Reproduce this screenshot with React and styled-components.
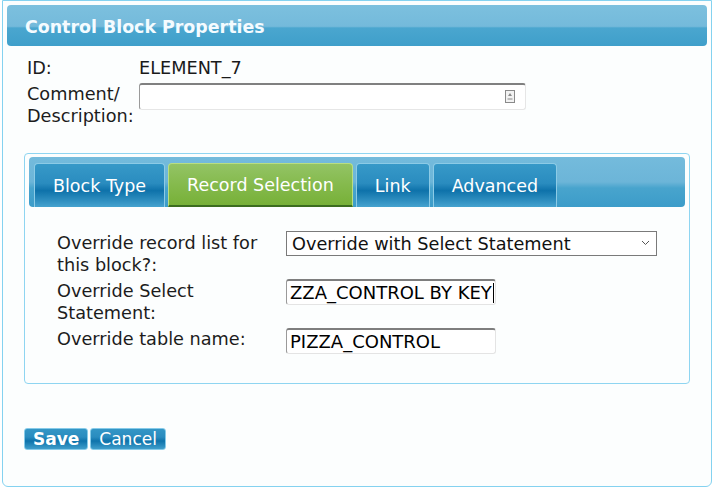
import React from 'react';
import styled, { createGlobalStyle } from 'styled-components';

const GlobalStyle = createGlobalStyle`
  html, body {
    margin: 0;
    padding: 0;
    background: #ffffff;
  }
  body {
    font-family: "DejaVu Sans", Verdana, sans-serif;
    color: #1a1a1a;
  }
`;

const Dialog = styled.div`
  box-sizing: border-box;
  width: 710px;
  height: 487px;
  margin-left: 2px;
  border: 1px solid #84d2f0;
  border-radius: 0 0 6px 6px;
  background: #fcfefe;
  padding: 4px;
  display: flex;
  flex-direction: column;
`;

const TitleBar = styled.div`
  height: 41px;
  box-sizing: border-box;
  border-radius: 4px;
  padding: 2px 0 0 18px;
  display: flex;
  align-items: center;
  color: #f4fbff;
  font-size: 17.4px;
  font-weight: bold;
  background: linear-gradient(
    to bottom,
    #7cc0de 0%,
    #74badb 52%,
    #4aa6cf 56%,
    #3f9fca 100%
  );
`;

const Body = styled.div`
  padding: 0 20px 0 20px;
`;

const InfoGrid = styled.div`
  display: grid;
  grid-template-columns: 112px 387px;
  align-items: start;
  row-gap: 4px;
  margin-top: 11px;
  font-size: 17.7px;
  line-height: 22px;
`;

const Label = styled.div`
  color: #1c1c1c;
`;

const TextArea = styled.div`
  position: relative;
  box-sizing: border-box;
  height: 27px;
  border: 1px solid #e6e6e6;
  border-top: 2px solid #808080;
  border-left: 1px solid #9a9a9a;
  border-radius: 3px;
  background: #ffffff;
`;

const ResizeIcon = styled.svg`
  position: absolute;
  right: 10px;
  top: 5px;
`;

const Panel = styled.div`
  margin: 26px -3px 0 -3px;
  border: 1px solid #8ed5f1;
  border-radius: 4px;
  padding: 3px 4px 29px 4px;
`;

const TabBar = styled.div`
  height: 50px;
  box-sizing: border-box;
  border-radius: 4px;
  padding: 6px 5px 0 5px;
  display: flex;
  align-items: flex-end;
  gap: 3px;
  background: linear-gradient(
    to bottom,
    #74bbdc 0%,
    #6cb5d8 50%,
    #48a4cd 62%,
    #3c9cc9 100%
  );
`;

const Tab = styled.div`
  box-sizing: border-box;
  height: 44px;
  padding: 0 18px;
  display: flex;
  align-items: center;
  color: #ffffff;
  font-size: 17.5px;
  border: 1px solid ${p => (p.$active ? '#b9de82' : '#8ccbe6')};
  border-bottom: ${p => (p.$active ? '2px solid #3b6d1f' : 'none')};
  border-radius: 4px 4px 0 0;
  background: ${p =>
    p.$active
      ? 'linear-gradient(to bottom, #93c465 0%, #85ba4d 50%, #77b038 100%)'
      : 'linear-gradient(to bottom, #3799c8 0%, #2a8cbf 45%, #0e72aa 62%, #2f8fc0 85%, #46a3cf 100%)'};
`;

const Form = styled.div`
  display: grid;
  grid-template-columns: 229px auto;
  align-items: start;
  row-gap: 4px;
  padding: 25px 0 0 28px;
  font-size: 17.7px;
  line-height: 22px;
`;

const SelectBox = styled.div`
  position: relative;
  width: 371px;
  height: 25px;
  margin-top: -1px;
  box-sizing: border-box;
  border: 1px solid #7a7a7a;
  background: #ffffff;
  display: flex;
  align-items: center;
  padding-left: 5px;
  color: #111;
  font-size: 17.7px;
`;

const Chevron = styled.svg`
  position: absolute;
  right: 6px;
  top: 8px;
`;

const Field = styled.div`
  box-sizing: border-box;
  width: 210px;
  height: 26px;
  margin-top: ${p => (p.$shift ? '-1px' : '0')};
  border: 1px solid #e4e4e4;
  border-top: 2px solid #7e7e7e;
  border-left: 1px solid #9a9a9a;
  border-radius: 3px;
  background: #ffffff;
  display: flex;
  align-items: center;
  padding-left: 3px;
  color: #000;
  font-size: 18px;
  white-space: nowrap;
  overflow: hidden;
`;

const Caret = styled.span`
  display: inline-block;
  flex: none;
  width: 1px;
  height: 20px;
  background: #000;
  margin-left: 1px;
`;

const Actions = styled.div`
  display: flex;
  gap: 2px;
  margin: 44px 0 0 -3px;
`;

const Button = styled.button`
  box-sizing: border-box;
  height: 22px;
  padding: 0 8px;
  border: 1px solid #86cbe9;
  border-radius: 3px;
  color: #ffffff;
  font-family: "DejaVu Sans", Verdana, sans-serif;
  font-size: 17px;
  font-weight: ${p => (p.$primary ? 'bold' : 'normal')};
  line-height: 20px;
  background: linear-gradient(
    to bottom,
    #3396c6 0%,
    #2a8cbf 40%,
    #0e73ab 60%,
    #3f9ecb 100%
  );
`;

export default function App() {
  return (
    <>
      <GlobalStyle />
      <Dialog>
        <TitleBar>Control Block Properties</TitleBar>
        <Body>
          <InfoGrid>
            <Label>ID:</Label>
            <div>ELEMENT_7</div>
            <Label>
              Comment/
              <br />
              Description:
            </Label>
            <TextArea>
              <ResizeIcon width="10" height="13" viewBox="0 0 10 13">
                <rect x="0.5" y="0.5" width="9" height="12" fill="#f2f2f2" stroke="#8a8a8a" />
                <path d="M5 3 L7 6 L3 6 Z" fill="#8a8a8a" />
                <rect x="2.5" y="8" width="5" height="2" fill="#bdbdbd" />
              </ResizeIcon>
            </TextArea>
          </InfoGrid>

          <Panel>
            <TabBar>
              <Tab>Block Type</Tab>
              <Tab $active>Record Selection</Tab>
              <Tab>Link</Tab>
              <Tab>Advanced</Tab>
            </TabBar>
            <Form>
              <Label>
                Override record list for
                <br />
                this block?:
              </Label>
              <SelectBox>
                Override with Select Statement
                <Chevron width="9" height="6" viewBox="0 0 9 6">
                  <path d="M1 1 L4.5 4.5 L8 1" fill="none" stroke="#555" strokeWidth="1" />
                </Chevron>
              </SelectBox>
              <Label>
                Override Select
                <br />
                Statement:
              </Label>
              <Field $shift>
                ZZA_CONTROL BY KEY
                <Caret />
              </Field>
              <Label>Override table name:</Label>
              <Field>PIZZA_CONTROL</Field>
            </Form>
          </Panel>

          <Actions>
            <Button $primary>Save</Button>
            <Button>Cancel</Button>
          </Actions>
        </Body>
      </Dialog>
    </>
  );
}
